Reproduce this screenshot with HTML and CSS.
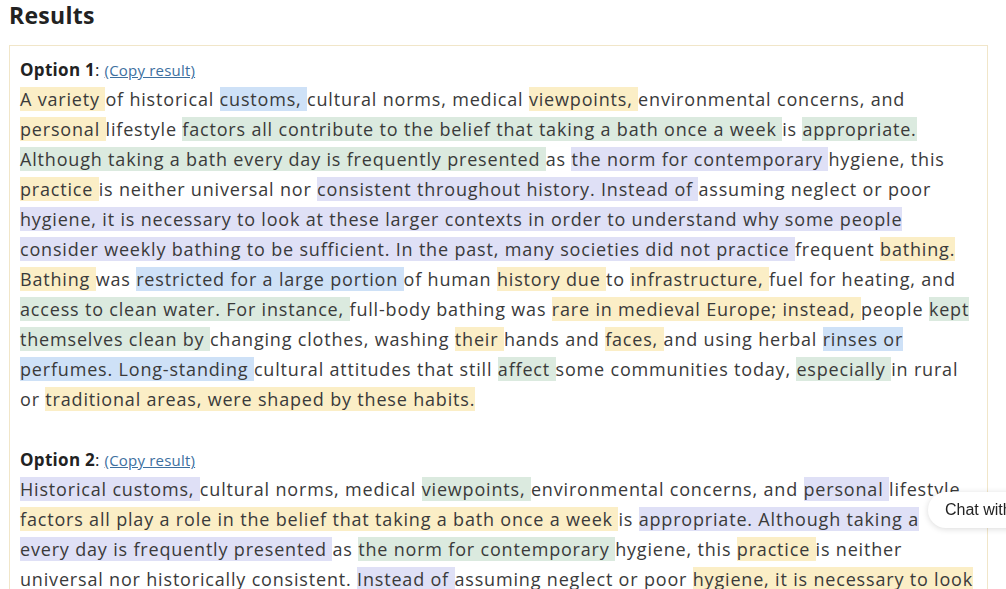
FILE: index.html
```html
<!DOCTYPE html>
<html>
<head>
    <meta name="viewport" content="width=device-width, initial-scale=1">
    <link rel="stylesheet" href="styles.css">
</head>
<body>

<h2 class="title">Results</h2>

<div class="results">
    <div class="option">
        <p class="option-head"><b>Option 1</b>: <a href="#" class="copy">(Copy result)</a></p>
        <p class="output">
            <span class="hl-y">A variety </span>of historical <span class="hl-b">customs, </span>cultural norms, medical <span class="hl-y">viewpoints, </span>environmental concerns, and<br>
            <span class="hl-y">personal </span>lifestyle <span class="hl-g">factors all contribute to the belief that taking a bath once a week </span>is <span class="hl-g">appropriate.<br>
            Although taking a bath every day is frequently presented </span>as <span class="hl-p">the norm for contemporary </span>hygiene, this<br>
            <span class="hl-y">practice </span>is neither universal nor <span class="hl-p">consistent throughout history. Instead of </span>assuming neglect or poor<br>
            <span class="hl-p">hygiene, it is necessary to look at these larger contexts in order to understand why some people<br>
            consider weekly bathing to be sufficient. In the past, many societies did not practice </span>frequent <span class="hl-y">bathing.<br>
            Bathing </span>was <span class="hl-b">restricted for a large portion </span>of human <span class="hl-y">history due </span>to <span class="hl-y">infrastructure, </span>fuel for heating, and<br>
            <span class="hl-g">access to clean water. For instance, </span>full-body bathing was <span class="hl-y">rare in medieval Europe; instead, </span>people <span class="hl-g">kept<br>
            themselves clean by </span>changing clothes, washing <span class="hl-y">their </span>hands and <span class="hl-y">faces, </span>and using herbal <span class="hl-b">rinses or<br>
            perfumes. Long-standing </span>cultural attitudes that still <span class="hl-g">affect </span>some communities today, <span class="hl-g">especially </span>in rural<br>
            or <span class="hl-y">traditional areas, were shaped by these habits.</span>
        </p>
    </div>

    <div class="option">
        <p class="option-head"><b>Option 2</b>: <a href="#" class="copy">(Copy result)</a></p>
        <p class="output">
            <span class="hl-p">Historical customs, </span>cultural norms, medical <span class="hl-g">viewpoints, </span>environmental concerns, and <span class="hl-p">personal </span>lifestyle<br>
            <span class="hl-y">factors all play a role in the belief that taking a bath once a week </span>is <span class="hl-p">appropriate. Although taking a </span><br>
            <span class="hl-p">every day is frequently presented </span>as <span class="hl-g">the norm for contemporary </span>hygiene, this <span class="hl-y">practice </span>is neither<br>
            universal nor historically consistent. <span class="hl-p">Instead of </span>assuming neglect or poor <span class="hl-y">hygiene, it is necessary to look</span>
        </p>
    </div>
</div>

<div class="chat-tab">Chat with us</div>

</body>
</html>
```

FILE: styles.css
```css
/* Result page for the paraphrase tool */
html, body {
    overflow: hidden;
}

body {
    margin: 0;
    padding: 0 18px 0 9px;
    font-family: "Open Sans", "DejaVu Sans", sans-serif;
    color: #3a3a3a;
    background: #fff;
}

.title {
    margin: 0;
    padding-top: 1px;
    height: 44px;
    line-height: 28px;
    font-size: 23px;
    font-weight: 700;
    letter-spacing: 0.3px;
    color: #222;
}

.results {
    border: 1px solid #f1e6c9;
    padding: 9px 10px 20px 10px;
}

.option + .option {
    margin-top: 31px;
}

.option-head {
    margin: 0;
    line-height: 30px;
    font-size: 17px;
    letter-spacing: 0.3px;
    color: #222;
}

.copy {
    font-size: 15px;
    letter-spacing: 0.2px;
    color: #3d70a0;
}

.output {
    margin: -1px 0 0 0;
    font-size: 18px;
    line-height: 30px;
    letter-spacing: 0.82px;
    white-space: nowrap;
}

.hl-y { background: #fbeec6; }
.hl-b { background: #cee1f7; }
.hl-g { background: #dbeadf; }
.hl-p { background: #dfe0f6; }

/* floating chat launcher on the right edge */
.chat-tab {
    position: fixed;
    top: 492px;
    left: 928px;
    height: 36px;
    line-height: 36px;
    padding: 0 16px 0 17px;
    background: #fff;
    border-radius: 18px 0 0 18px;
    box-shadow: 0 1px 6px rgba(0, 0, 0, 0.15);
    font-family: "Liberation Sans", Arial, sans-serif;
    font-size: 16px;
    color: #222;
    white-space: nowrap;
}
```
